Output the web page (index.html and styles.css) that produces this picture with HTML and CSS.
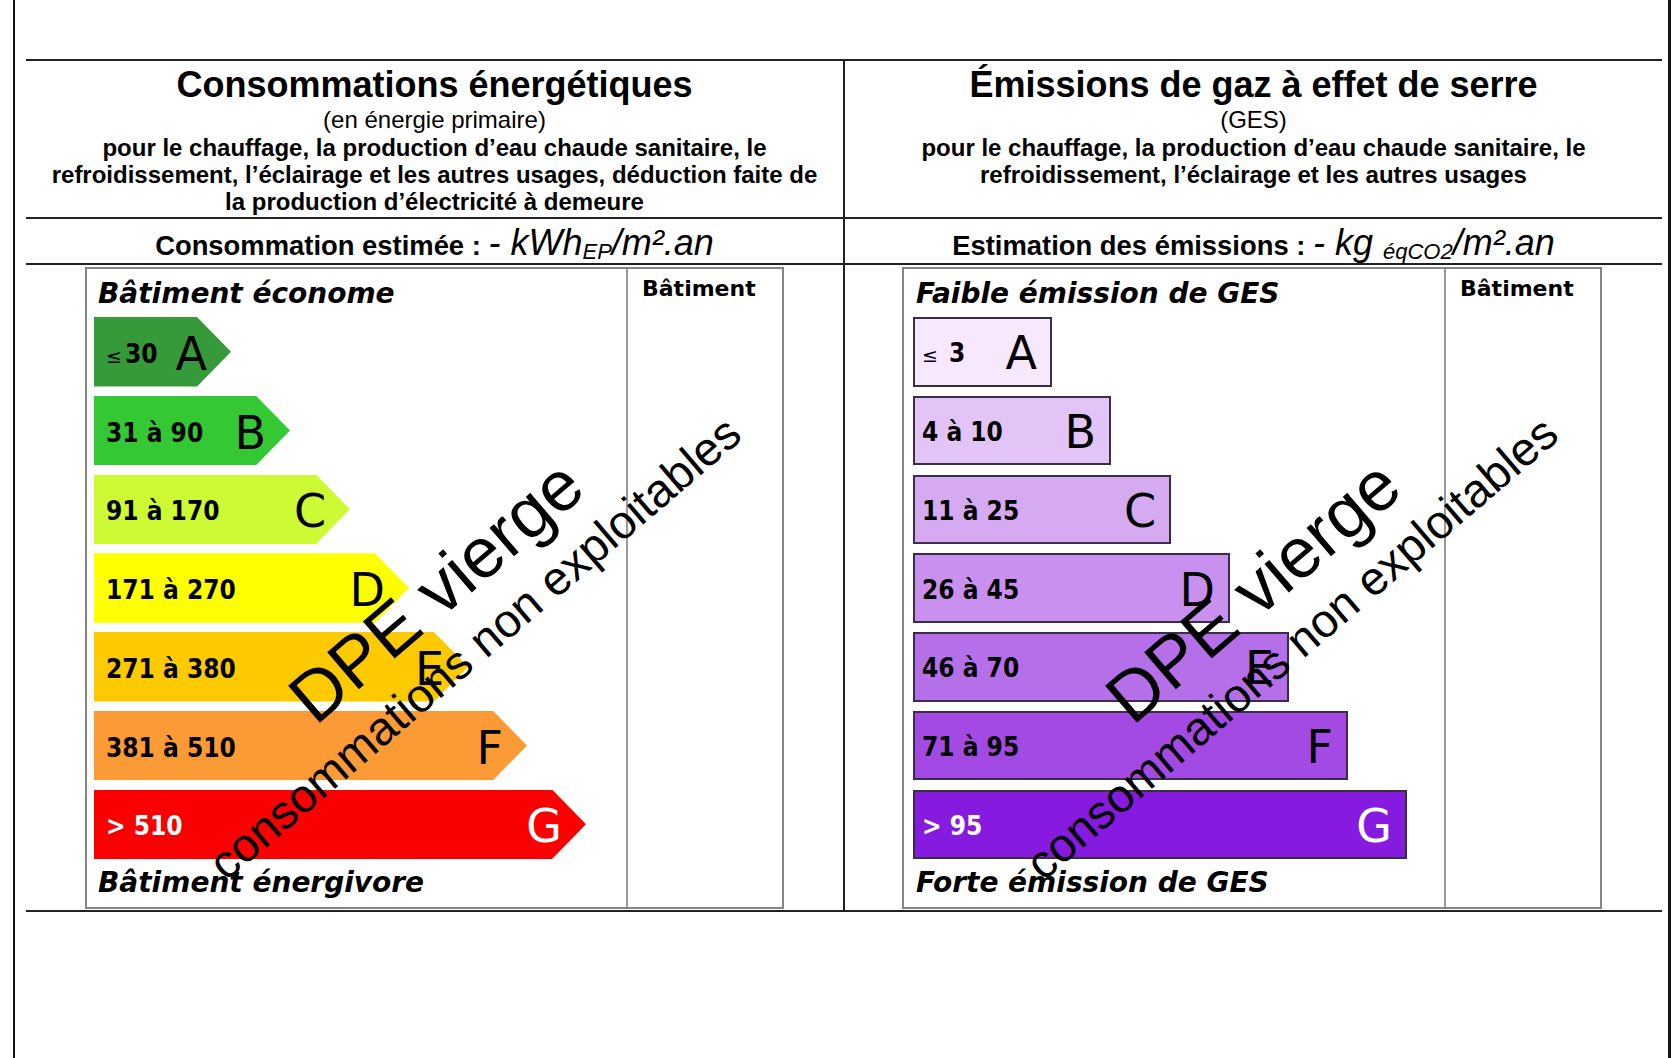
FILE: index.html
```html
<!DOCTYPE html>
<html lang="fr">
<head>
<meta charset="utf-8">
<title>DPE vierge</title>
<link rel="stylesheet" href="styles.css">
</head>
<body>
<div class="frame">
  <div class="table">
    <div class="row row-head">
      <div class="cell cell-left head-cell">
        <div class="title">Consommations énergétiques</div>
        <div class="sub">(en énergie primaire)</div>
        <div class="desc">pour le chauffage, la production d’eau chaude sanitaire, le<br>refroidissement, l’éclairage et les autres usages, déduction faite de<br>la production d’électricité à demeure</div>
      </div>
      <div class="cell head-cell">
        <div class="title">Émissions de gaz à effet de serre</div>
        <div class="sub">(GES)</div>
        <div class="desc">pour le chauffage, la production d’eau chaude sanitaire, le<br>refroidissement, l’éclairage et les autres usages</div>
      </div>
    </div>
    <div class="row row-est">
      <div class="cell cell-left est-cell"><span class="est-label">Consommation estimée :</span> <span class="est-val">- kWh<span class="est-sub">EP</span>/m².an</span></div>
      <div class="cell est-cell"><span class="est-label">Estimation des émissions :</span> <span class="est-val">- kg <span class="est-sub">éqCO2</span>/m².an</span></div>
    </div>
    <div class="row row-chart">
      <div class="cell cell-left chart-cell">
        <div class="chart">
          <div class="chart-main">
            <div class="chart-label">Bâtiment économe</div>
            <div class="bars">
              <div class="bar arrow w1 e-a"><span class="range"><span class="le">≤</span>30</span><span class="letter">A</span></div>
              <div class="bar arrow w2 e-b"><span class="range">31 à 90</span><span class="letter">B</span></div>
              <div class="bar arrow w3 e-c"><span class="range">91 à 170</span><span class="letter">C</span></div>
              <div class="bar arrow w4 e-d"><span class="range">171 à 270</span><span class="letter">D</span></div>
              <div class="bar arrow w5 e-e"><span class="range">271 à 380</span><span class="letter">E</span></div>
              <div class="bar arrow w6 e-f"><span class="range">381 à 510</span><span class="letter">F</span></div>
              <div class="bar arrow w7 e-g"><span class="range">&gt; 510</span><span class="letter">G</span></div>
            </div>
            <div class="chart-label foot">Bâtiment énergivore</div>
          </div>
          <div class="chart-side">Bâtiment</div>
          <div class="wm">
            <div class="wm-inner">
              <div class="wm-big">DPE vierge</div>
              <div class="wm-small">consommations non exploitables</div>
            </div>
          </div>
        </div>
      </div>
      <div class="cell chart-cell">
        <div class="chart chart-ges">
          <div class="chart-main">
            <div class="chart-label">Faible émission de GES</div>
            <div class="bars">
              <div class="bar box w1 g-a"><span class="range"><span class="le">≤</span> 3</span><span class="letter">A</span></div>
              <div class="bar box w2 g-b"><span class="range">4 à 10</span><span class="letter">B</span></div>
              <div class="bar box w3 g-c"><span class="range">11 à 25</span><span class="letter">C</span></div>
              <div class="bar box w4 g-d"><span class="range">26 à 45</span><span class="letter">D</span></div>
              <div class="bar box w5 g-e"><span class="range">46 à 70</span><span class="letter">E</span></div>
              <div class="bar box w6 g-f"><span class="range">71 à 95</span><span class="letter">F</span></div>
              <div class="bar box w7 g-g"><span class="range">&gt; 95</span><span class="letter">G</span></div>
            </div>
            <div class="chart-label foot">Forte émission de GES</div>
          </div>
          <div class="chart-side">Bâtiment</div>
          <div class="wm">
            <div class="wm-inner">
              <div class="wm-big">DPE vierge</div>
              <div class="wm-small">consommations non exploitables</div>
            </div>
          </div>
        </div>
      </div>
    </div>
  </div>
</div>
</body>
</html>
```
FILE: styles.css
```css
html, body {
  margin: 0;
  padding: 0;
  background: #ffffff;
  overflow: hidden;
}

.frame {
  margin-left: 13px;
  width: 1658px;
  height: 100vh;
  box-sizing: border-box;
  border-left: 2px solid #141414;
  border-right: 3px solid #141414;
  padding-top: 59px;
  overflow: hidden;
}

.table {
  margin-left: 11px;
  width: 1636px;
  border-top: 2px solid #222222;
}

.row {
  display: grid;
  grid-template-columns: 819px 817px;
  border-bottom: 2px solid #222222;
}

.cell {
  box-sizing: border-box;
}

.cell-left {
  border-right: 2px solid #222222;
}

/* header row */
.row-head {
  height: 156px;
}

.head-cell {
  text-align: center;
  font-family: "Liberation Sans", Arial, sans-serif;
  color: #000000;
  padding-top: 4px;
}

.title {
  font-size: 36px;
  font-weight: bold;
  line-height: 40px;
}

.sub {
  font-size: 24px;
  line-height: 29px;
}

.desc {
  font-size: 24px;
  font-weight: bold;
  line-height: 27px;
}

/* estimate row */
.row-est {
  height: 44px;
}

.est-cell {
  height: 44px;
  padding-top: 7px;
  text-align: center;
  font-family: "Liberation Sans", Arial, sans-serif;
  font-size: 27.4px;
  font-weight: bold;
  line-height: 40px;
  white-space: nowrap;
  color: #000000;
}

.est-val {
  font-size: 36px;
  font-weight: normal;
  font-style: italic;
  line-height: 0;
}

.est-sub {
  font-size: 22px;
  line-height: 0;
  vertical-align: -4px;
}

/* chart row */
.row-chart {
  height: 645px;
}

.chart-cell {
  padding-top: 2px;
}

.chart {
  position: relative;
  margin-left: 59px;
  width: 699px;
  height: 642px;
  box-sizing: border-box;
  border: 2px solid #858585;
  display: grid;
  grid-template-columns: 541px 154px;
  font-family: "DejaVu Sans", Verdana, sans-serif;
  color: #000000;
}

.chart-ges {
  margin-left: 57px;
  width: 700px;
  grid-template-columns: 542px 154px;
}

.chart-main {
  border-right: 2px solid #9a9a9a;
  padding: 8px 0 0 7px;
  display: flex;
  flex-direction: column;
}

.chart-ges .chart-main {
  padding-left: 9px;
}

.chart-label {
  font-size: 28px;
  font-weight: bold;
  font-style: italic;
  line-height: 34px;
  padding-left: 4px;
  margin-bottom: 6px;
  white-space: nowrap;
}

.chart-ges .chart-label {
  padding-left: 3px;
}

.chart-label.foot {
  margin-top: 7px;
  margin-bottom: 0;
}

.chart-side {
  padding: 7px 0 0 14px;
  font-size: 22px;
  font-weight: bold;
  line-height: 26px;
}

.bars {
  display: flex;
  flex-direction: column;
  gap: 9.25px;
}

.bar {
  height: 69.5px;
  box-sizing: border-box;
  display: flex;
  align-items: center;
  justify-content: space-between;
  padding: 4px 24px 0 12px;
  width: var(--w);
}

.arrow {
  clip-path: polygon(0 0, calc(100% - 34px) 0, 100% 50%, calc(100% - 34px) 100%, 0 100%);
}

.box {
  width: calc(var(--w) + 2px);
  border: 2px solid #3b2d48;
  padding: 3px 13px 0 7px;
}

.w1 { --w: 137px; }
.w2 { --w: 196px; }
.w3 { --w: 256px; }
.w4 { --w: 315px; }
.w5 { --w: 374px; }
.w6 { --w: 433px; }
.w7 { --w: 492px; }

.range {
  font-family: "DejaVu Sans Condensed", "DejaVu Sans", Verdana, sans-serif;
  font-stretch: condensed;
  font-size: 26px;
  font-weight: bold;
  white-space: nowrap;
}

.le {
  font-family: "DejaVu Sans", Verdana, sans-serif;
  font-stretch: normal;
  font-size: 19px;
  font-weight: normal;
  margin-right: 3px;
}

.letter {
  font-size: 46px;
  line-height: 50px;
}

.e-a { background: #36993a; }
.e-b { background: #35c835; }
.e-c { background: #ccfb36; }
.e-d { background: #ffff00; }
.e-e { background: #fdca00; }
.e-f { background: #fc9a36; }
.e-g { background: #fb0000; color: #ffffff; }

.g-a { background: #f7e8fd; }
.g-b { background: #e2c5f6; }
.g-c { background: #d5aaf1; }
.g-d { background: #ca90ef; }
.g-e { background: #b56fe9; }
.g-f { background: #a24ae3; }
.g-g { background: #861ade; color: #ffffff; }

/* watermark overlay */
.wm {
  position: absolute;
  left: 363px;
  top: 350px;
  width: 0;
  height: 0;
}

.wm-inner {
  position: absolute;
  left: 0;
  top: 0;
  transform: translate(-50%, -50%) rotate(-40.6deg);
  white-space: nowrap;
  text-align: center;
  font-family: "Liberation Sans", Arial, sans-serif;
  color: #000000;
}

.wm-big {
  font-size: 71px;
  line-height: 72px;
  padding-left: 15px;
}

.wm-small {
  font-size: 47px;
  line-height: 56px;
  margin-top: 4px;
}
```
